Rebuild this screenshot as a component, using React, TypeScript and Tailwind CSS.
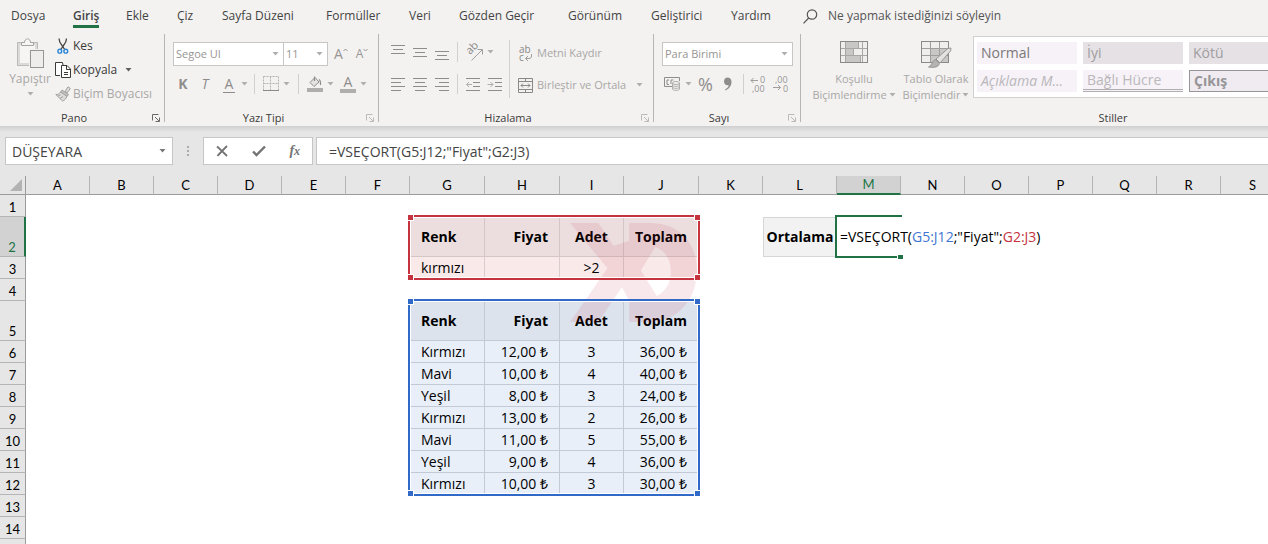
import React from "react";

type IconProps = { className?: string };

const Caret = ({ className = "text-[#b0aeac]" }: IconProps) => (
  <svg width="7" height="4" viewBox="0 0 7 4" className={`shrink-0 ${className}`} aria-hidden="true">
    <path d="M0.500 0H6.500L3.500 3.600Z" fill="currentColor" />
  </svg>
);

const Lines = ({ rows }: { rows: [number, number, number][] }) => (
  <svg width="16" height="16" viewBox="0 0 16 16" fill="#8f8d8b" aria-hidden="true">
    {rows.map(([x, y, w]) => (
      <rect key={y} x={x} y={y} width={w} height="1" />
    ))}
  </svg>
);

const PasteIcon = () => (
  <svg width="30" height="32" viewBox="0 0 30 32" aria-hidden="true">
    <rect x="2.500" y="4.500" width="20" height="23" fill="#dcdad9" stroke="#bdbbba" />
    <rect x="5" y="7" width="15" height="18" fill="#f6f5f4" />
    <path d="M6.500 7.500V4.500H9.500C9.500 -0.300 15.500 -0.300 15.500 4.500H18.500V7.500Z" fill="#f6f5f4" stroke="#a5a3a2" />
    <rect x="14" y="11" width="15" height="19" fill="#f3f2f1" />
    <rect x="15.500" y="12.500" width="13" height="17" fill="#eeedec" stroke="#979594" />
  </svg>
);

const CutIcon = () => (
  <svg width="16" height="16" viewBox="0 0 16 16" fill="none" aria-hidden="true">
    <path d="M4 0.500C4 3 5 5 7 7.500L10 12" stroke="#444" strokeWidth="1.300" />
    <path d="M11.500 0.500C11.500 3 10.500 5 8.500 7.500L5.500 12" stroke="#444" strokeWidth="1.300" />
    <circle cx="4.800" cy="13.200" r="1.900" stroke="#2b88d8" strokeWidth="1.400" />
    <circle cx="10.800" cy="13.200" r="1.900" stroke="#2b88d8" strokeWidth="1.400" />
  </svg>
);

const CopyIcon = () => (
  <svg width="16" height="16" viewBox="0 0 16 16" fill="#fff" stroke="#3b3a39" aria-hidden="true">
    <path d="M5 13.500H0.500V0.500H7.500L8 3" />
    <path d="M6.500 3.500H12L15.500 7V15.500H6.500Z" />
    <path d="M11.500 3.500V7.500H15.500M9 10.500H13M9 12.500H13" fill="none" />
  </svg>
);

const BrushIcon = () => (
  <svg width="16" height="16" viewBox="0 0 16 16" fill="#dddbda" stroke="#a3a1a0" aria-hidden="true">
    <path d="M10 5.500L13 0.800L15.300 2.500L12.300 6.800Z" />
    <path d="M7 4L13.500 8.500L12 10.500L5.800 6Z" fill="#c4c2c1" />
    <path d="M5.800 6L12 10.500C11 12.500 9.500 14.500 7.500 15L0.800 8.500C3 8.800 4.500 7.500 5.800 6Z" />
    <path d="M3 10L5.500 9M5 12.500L8 10.500" />
  </svg>
);

const Launcher = ({ dark = false }: { dark?: boolean }) => (
  <button
    type="button"
    aria-label="İletişim kutusu başlatıcısı"
    className={`absolute right-1 bottom-1 ${dark ? "text-[#6b6967]" : "text-[#bcbab8]"}`}
  >
    <svg width="8" height="8" viewBox="0 0 8 8" fill="none" stroke="currentColor" aria-hidden="true">
      <path d="M0.500 6.500V0.500H6.500M3 3L7 7M7.500 3.500V7.500H3.500" />
    </svg>
  </button>
);

const BordersIcon = () => (
  <svg width="16" height="16" viewBox="0 0 16 16" fill="none" stroke="#b5b3b1" aria-hidden="true">
    <path d="M0.500 0.500H15.500M0.500 7.500H15.500M0.500 0.500V14M7.500 0.500V14M15.500 0.500V14" strokeDasharray="2 1" />
    <path d="M0 14.500H16" stroke="#8c8a88" />
  </svg>
);

const FillIcon = () => (
  <svg width="16" height="16" viewBox="0 0 16 16" fill="none" aria-hidden="true">
    <path d="M3 6.500L8 1.500L12 6L7 10.500Z" fill="#e4e3e2" stroke="#8f8d8b" />
    <path d="M7.500 5V0.500M12 3.500C14 4.500 13.500 7 13.500 9" stroke="#8f8d8b" strokeWidth="1.200" />
    <rect y="12" width="16" height="4" fill="#b0aeac" />
  </svg>
);

const OrientationIcon = () => (
  <svg width="18" height="18" viewBox="0 0 18 18" fill="none" stroke="#a09e9c" className="overflow-visible" aria-hidden="true">
    <text x="0" y="0" fontFamily="Open Sans" fontSize="11" fill="#8a8886" stroke="none" transform="translate(5 12) rotate(-45)">ab</text>
    <path d="M6.500 17.500L17 7M12.500 6.500H17.500V11.500" />
  </svg>
);

const IndentIcon = ({ right = false }: { right?: boolean }) => (
  <svg width="16" height="16" viewBox="0 0 16 16" fill="none" stroke="#8f8d8b" aria-hidden="true">
    <path d="M1 2.500H15M8 6.500H15M8 10.500H15M1 14.500H15" />
    <path d={right ? "M0.500 8.500H6M3.500 6L6 8.500L3.500 11" : "M7 8.500H1.500M4 6L1.500 8.500L4 11"} stroke="#b0aeac" />
  </svg>
);

const WrapIcon = () => (
  <svg width="15" height="17" viewBox="0 0 15 17" fill="none" stroke="#a09e9c" className="overflow-visible" aria-hidden="true">
    <text x="1" y="8" fontFamily="Open Sans" fontSize="10" fill="#8a8886" stroke="none">ab</text>
    <text x="1" y="16" fontFamily="Open Sans" fontSize="10" fill="#8a8886" stroke="none">c</text>
    <path d="M13.500 9V11C13.500 12.500 12.500 13.500 11 13.500H7.500M10 11L7.500 13.500L10 16" />
  </svg>
);

const MergeIcon = () => (
  <svg width="15" height="15" viewBox="0 0 15 15" fill="none" stroke="#8a8886" aria-hidden="true">
    <path d="M0.500 0.500H14.500V14.500H0.500ZM0.500 3.500H14.500M0.500 11.500H14.500M7.500 0.500V3.500M7.500 11.500V14.500" />
    <path d="M3 7.500H12M5 5.500L3 7.500L5 9.500M10 5.500L12 7.500L10 9.500" />
  </svg>
);

const MoneyIcon = () => (
  <svg width="17" height="14" viewBox="0 0 17 14" fill="none" stroke="#8f8d8b" aria-hidden="true">
    <path d="M8 9.500H0.500V0.500H15.500V4" />
    <path d="M5 3H3V7.500H5M7 7V3H9.500" />
    <ellipse cx="12" cy="6" rx="3.500" ry="1.500" fill="#f3f2f1" stroke="#b0aeac" />
    <path d="M8.500 6V12C8.500 13.800 15.500 13.800 15.500 12V6M8.500 8C8.500 9.800 15.500 9.800 15.500 8M8.500 10C8.500 11.800 15.500 11.800 15.500 10" stroke="#b0aeac" />
  </svg>
);

const DecimalIcon = ({ increase = false }: { increase?: boolean }) => (
  <svg width="17" height="16" viewBox="0 0 17 16" fill="none" stroke="#a09e9c" className="overflow-visible" aria-hidden="true">
    <g fontFamily="Open Sans" fontSize="9" fill="#979593" stroke="none">
      {increase ? (
        <>
          <text x="10" y="7">0</text>
          <text x="2" y="16">,00</text>
        </>
      ) : (
        <>
          <text x="2" y="7">,00</text>
          <text x="10" y="16">0</text>
        </>
      )}
    </g>
    <path d={increase ? "M8 4.500H1M3.500 2L1 4.500L3.500 7" : "M0 11.500H7.500M5 9L7.500 11.500L5 14"} />
  </svg>
);

const ConditionalIcon = () => (
  <svg width="28" height="22" viewBox="0 0 28 22" fill="none" aria-hidden="true">
    <rect x="0.500" y="0.500" width="27" height="21" fill="#efeeed" />
    <path d="M6 1H18V7H6ZM6 8H14V14H6ZM6 15H20V21H6Z" fill="#c9c7c6" />
    <path d="M5.500 0.500V21.500M0.500 7.500H27.500M0.500 14.500H27.500M13.500 7V14M18.500 1V7M20.500 15V21M22.500 1V21" stroke="#a9a7a6" />
    <rect x="0.500" y="0.500" width="27" height="21" stroke="#8c8a88" />
  </svg>
);

const TableIcon = () => (
  <svg width="31" height="28" viewBox="0 0 31 28" fill="none" aria-hidden="true">
    <rect x="0.500" y="0.500" width="27" height="21" fill="#efeeed" />
    <path d="M10 8H27V21H10Z" fill="#c9c7c6" />
    <path d="M9.500 0.500V21.500M18.500 0.500V21.500M0.500 7.500H27.500M0.500 14.500H27.500" stroke="#a09e9c" />
    <rect x="0.500" y="0.500" width="27" height="21" stroke="#8c8a88" />
    <path d="M15 18L27 7.500L30 7L29.500 10L19 22Z" fill="#e4e2e1" stroke="#989694" />
    <path d="M14.500 18.500L18.500 22.500C17.500 26 13 27 7.500 26C11 25 10.500 20 14.500 18.500Z" fill="#b5b3b1" stroke="#989694" />
  </svg>
);

const Watermark = ({ className = "" }: IconProps) => (
  <svg viewBox="30 30 380 296" className={className} fill="#b81e37" fillOpacity="0.100" fillRule="evenodd" aria-hidden="true">
    <path d="M30 30H115L160 98L207 84V30H270C360 30 410 95 410 170C410 255 355 326 270 326H207V262L185 222L115 326H30L142 165ZM285 102L242 172L290 248C320 232 332 205 332 175C332 140 315 112 285 102Z" />
  </svg>
);

const tabs = ["Dosya", "Giriş", "Ekle", "Çiz", "Sayfa Düzeni", "Formüller", "Veri", "Gözden Geçir", "Görünüm", "Geliştirici", "Yardım"];

const VLine = ({ className = "h-5" }: IconProps) => <span className={`w-px shrink-0 bg-[#d2d0ce] ${className}`} />;

const GroupLine = () => <div className="mt-0.5 mb-1 w-px shrink-0 bg-[#b8b6b4]" />;

function Group({ label, launcher, className, children }: { label: string; launcher?: "dark" | "light"; className: string; children: React.ReactNode }) {
  return (
    <section aria-label={label} className={`relative flex shrink-0 flex-col ${className}`}>
      <div className="flex h-[78px]">{children}</div>
      <div className={`text-center text-[11px] leading-4 text-[#3b3a39] ${launcher ? "pr-4" : ""}`}>{label}</div>
      {launcher && <Launcher dark={launcher === "dark"} />}
    </section>
  );
}

function Combo({ label, value, className }: { label: string; value: string; className: string }) {
  return (
    <div className={`relative flex h-6 items-center border border-[#c8c6c4] bg-white ${className}`}>
      <select aria-label={label} className="h-5 w-full appearance-none bg-transparent pl-0.5 text-[11px] leading-5 text-[#979593] outline-none">
        <option>{value}</option>
      </select>
      <span className="pointer-events-none absolute inset-y-0 right-1 flex items-center">
        <Caret />
      </span>
    </div>
  );
}

function Ribbon() {
  return (
    <div className="flex h-[94px] overflow-hidden">
      <Group label="Pano" launcher="dark" className="w-[164px]">
        <div className="flex w-full pl-2.5">
          <button type="button" className="flex w-10 flex-col items-center pt-1.5 text-xs text-[#a9a7a5]">
            <PasteIcon />
            <span className="leading-[18px]">Yapıştır</span>
            <Caret className="mt-1 text-[#b0aeac]" />
          </button>
          <div className="flex flex-col pt-0.5 pl-[5px] text-[#3b3a39]">
            <button type="button" className="flex h-6 items-center gap-0.5 text-xs">
              <CutIcon />
              Kes
            </button>
            <button type="button" className="flex h-6 items-center gap-0.5 text-xs">
              <CopyIcon />
              Kopyala
              <Caret className="ml-1.5 text-[#605e5c]" />
            </button>
            <button type="button" className="flex h-6 items-center gap-0.5 text-xs whitespace-nowrap text-[#a9a7a5]">
              <BrushIcon />
              Biçim Boyacısı
            </button>
          </div>
        </div>
      </Group>
      <GroupLine />
      <Group label="Yazı Tipi" launcher="light" className="w-[213px]">
        <div className="flex flex-col gap-2 pt-2.5 pl-2">
          <div className="flex items-center">
            <Combo label="Yazı tipi" value="Segoe UI" className="w-[111px]" />
            <Combo label="Yazı tipi boyutu" value="11" className="w-11 border-l-0" />
            <button type="button" aria-label="Yazı tipini büyüt" className="ml-1.5 flex text-sm leading-5 text-[#979593]">
              A
              <svg width="5" height="4" viewBox="0 0 5 4" fill="none" stroke="currentColor" className="mt-1" aria-hidden="true">
                <path d="M0.500 3L2.500 1L4.500 3" />
              </svg>
            </button>
            <button type="button" aria-label="Yazı tipini küçült" className="ml-2 flex text-xs leading-5 text-[#979593]">
              A
              <svg width="5" height="4" viewBox="0 0 5 4" fill="none" stroke="currentColor" className="mt-1" aria-hidden="true">
                <path d="M0.500 1L2.500 3L4.500 1" />
              </svg>
            </button>
          </div>
          <div className="flex h-5 items-center text-sm leading-5 text-[#8f8d8b]">
            <button type="button" className="w-5 font-bold">K</button>
            <button type="button" className="w-6 italic">T</button>
            <button type="button" className="w-6"><span className="inline-block border-b border-[#8f8d8b] px-0.5 leading-4">A</span></button>
            <Caret />
            <VLine className="ml-1.5 h-5" />
            <button type="button" aria-label="Kenarlıklar" className="ml-2"><BordersIcon /></button>
            <Caret className="ml-1 text-[#b0aeac]" />
            <VLine className="ml-2 h-5" />
            <button type="button" aria-label="Dolgu rengi" className="ml-2"><FillIcon /></button>
            <Caret className="ml-1 text-[#b0aeac]" />
            <button type="button" aria-label="Yazı tipi rengi" className="ml-1.5 w-4 border-b-4 border-[#b0aeac] leading-[14px]">A</button>
            <Caret className="ml-1 text-[#b0aeac]" />
          </div>
        </div>
      </Group>
      <GroupLine />
      <Group label="Hizalama" launcher="light" className="w-[274px]">
        <div className="flex w-full pl-[11px] text-[#a9a7a5]">
          <div className="flex flex-col gap-3 pt-2.5">
            <div className="flex h-5 items-center gap-1.5">
              <button type="button" aria-label="Üste hizala"><Lines rows={[[1, 1, 14], [3, 5, 10], [1, 9, 14]]} /></button>
              <button type="button" aria-label="Ortaya hizala"><Lines rows={[[1, 4, 14], [3, 8, 10], [1, 12, 14]]} /></button>
              <button type="button" aria-label="Alta hizala"><Lines rows={[[1, 7, 14], [3, 11, 10], [1, 15, 14]]} /></button>
              <VLine className="mr-px ml-px h-5" />
              <button type="button" aria-label="Yönlendirme"><OrientationIcon /></button>
              <Caret className="-ml-0.5 text-[#b0aeac]" />
            </div>
            <div className="flex h-5 items-center gap-1.5">
              <button type="button" aria-label="Sola hizala"><Lines rows={[[1, 2, 14], [1, 6, 10], [1, 10, 14], [1, 14, 10]]} /></button>
              <button type="button" aria-label="Ortala"><Lines rows={[[1, 2, 14], [3, 6, 10], [1, 10, 14], [3, 14, 10]]} /></button>
              <button type="button" aria-label="Sağa hizala"><Lines rows={[[1, 2, 14], [5, 6, 10], [1, 10, 14], [5, 14, 10]]} /></button>
              <VLine className="mr-px ml-px h-5" />
              <button type="button" aria-label="Girintiyi azalt"><IndentIcon /></button>
              <button type="button" aria-label="Girintiyi artır"><IndentIcon right /></button>
            </div>
          </div>
          <VLine className="mt-2 ml-1.5 h-[58px]" />
          <div className="flex flex-col gap-3 pt-[11px] pl-2">
            <button type="button" className="flex h-5 items-center gap-1 text-[11px] whitespace-nowrap"><WrapIcon />Metni Kaydır</button>
            <button type="button" className="flex h-5 items-center gap-1 text-[11px] whitespace-nowrap">
              <MergeIcon />Birleştir ve Ortala<Caret className="ml-1.5 text-[#b0aeac]" />
            </button>
          </div>
        </div>
      </Group>
      <GroupLine />
      <Group label="Sayı" launcher="light" className="w-[146px]">
        <div className="flex flex-col gap-2 pt-2.5 pl-2">
          <Combo label="Sayı biçimi" value="Para Birimi" className="w-[131px]" />
          <div className="flex h-5 items-center pl-0.5 text-[#8f8d8b]">
            <button type="button" aria-label="Finansal sayı biçimi"><MoneyIcon /></button>
            <Caret className="ml-1 text-[#b0aeac]" />
            <button type="button" className="ml-1.5 text-lg leading-5">%</button>
            <button type="button" aria-label="Binlik ayırıcı" className="ml-2.5">
              <svg width="10" height="14" viewBox="0 0 10 14" fill="currentColor" aria-hidden="true">
                <path d="M4.500 0.500C7 0.500 8.500 2.200 8.500 4.800C8.500 9 6 12 2.500 13.500L2 12.500C4.300 11.300 5.500 10 5.700 8.200C3 8.800 1 7 1 4.500C1 2 2.500 0.500 4.500 0.500Z" />
              </svg>
            </button>
            <VLine className="ml-2.5 h-5" />
            <button type="button" aria-label="Ondalık artır" className="ml-1.5"><DecimalIcon increase /></button>
            <button type="button" aria-label="Ondalık azalt" className="ml-1.5"><DecimalIcon /></button>
          </div>
        </div>
      </Group>
      <GroupLine />
      <Group label="Stiller" className="w-[624px]">
        <div className="flex w-full pt-1 pl-2 text-[#a9a7a5]">
          <button type="button" className="flex w-[90px] flex-col items-center pt-[5px] text-[11px] leading-4 whitespace-nowrap">
            <span className="flex h-[30px]"><ConditionalIcon /></span>
            <span>Koşullu</span>
            <span className="flex items-center gap-0.5">Biçimlendirme<Caret /></span>
          </button>
          <button type="button" className="flex w-[74px] flex-col items-center pt-[5px] text-[11px] leading-4 whitespace-nowrap">
            <span className="flex h-[30px]"><TableIcon /></span>
            <span>Tablo Olarak</span>
            <span className="flex items-center gap-0.5">Biçimlendir<Caret /></span>
          </button>
          <div className="grid h-[62px] flex-1 grid-cols-[repeat(3,100px)] grid-rows-2 gap-1.5 border border-[#d2d0ce] bg-white px-[3px] py-[5px] text-left text-sm leading-5">
            <button type="button" className="bg-[#f6f2f8] pl-1 text-left text-[#7a7876]">Normal</button>
            <button type="button" className="bg-[#e5e1e5] pl-1 text-left text-[#a09ea0]">İyi</button>
            <button type="button" className="bg-[#e5e1e5] pl-1 text-left text-[#a09ea0]">Kötü</button>
            <button type="button" className="bg-[#f6f2f8] pl-1 text-left text-[#bab8ba] italic">Açıklama M...</button>
            <button type="button" className="border-b-3 border-double border-[#b0aeb0] bg-[#f6f2f8] pl-1 text-left text-[#bab8ba]">Bağlı Hücre</button>
            <button type="button" className="border border-[#979597] bg-[#efebf1] pl-1 text-left font-bold text-[#979597]">Çıkış</button>
          </div>
        </div>
      </Group>
    </div>
  );
}

function FormulaBar() {
  return (
    <div className="flex h-[50px] bg-[#e6e6e6] bg-linear-to-b from-[#cfcfcf] to-[#e6e6e6] to-[6px] pt-[11px] pl-[5px]">
      <div className="relative h-7 w-[168px] border border-[#c6c6c6] bg-white">
        <input aria-label="Ad kutusu" defaultValue="DÜŞEYARA" className="h-full w-full bg-transparent pl-1.5 text-sm text-[#444] outline-none" />
        <span className="pointer-events-none absolute inset-y-0 right-1.5 flex items-center"><Caret className="text-[#777]" /></span>
      </div>
      <svg width="30" height="28" viewBox="0 0 30 28" fill="#ababab" aria-hidden="true">
        <path d="M14 9H16V11H14ZM14 13H16V15H14ZM14 17H16V19H14Z" />
      </svg>
      <div className="flex h-7 w-[110px] items-center justify-around border border-[#c6c6c6] bg-white text-[#737373]">
        <button type="button" aria-label="İptal">
          <svg width="12" height="12" viewBox="0 0 12 12" fill="none" stroke="currentColor" strokeWidth="1.800" aria-hidden="true"><path d="M1 1.500C4 4 8 8 11 11M11 1C8 4 4 8 1.500 11" /></svg>
        </button>
        <button type="button" aria-label="Gir">
          <svg width="14" height="12" viewBox="0 0 14 12" fill="none" stroke="currentColor" strokeWidth="2.400" aria-hidden="true"><path d="M1 6.500L4.500 10L13 1.500" /></svg>
        </button>
        <button type="button" aria-label="İşlev ekle" className="font-['Liberation_Serif',serif] text-sm leading-5 font-bold italic">
          f<span className="text-xs">x</span>
        </button>
      </div>
      <input
        aria-label="Formül çubuğu"
        defaultValue={'=VSEÇORT(G5:J12;"Fiyat";G2:J3)'}
        className="ml-[3px] h-7 min-w-0 flex-1 border border-r-0 border-[#c6c6c6] bg-white pl-3 text-sm text-[#444] outline-none"
      />
    </div>
  );
}

const columns: [string, string][] = [
  ["A", "w-16"], ["B", "w-16"], ["C", "w-16"], ["D", "w-16"], ["E", "w-16"], ["F", "w-16"],
  ["G", "w-[75px]"], ["H", "w-[75px]"], ["I", "w-16"], ["J", "w-[75px]"], ["K", "w-16"], ["L", "w-[74px]"],
  ["M", "w-16"], ["N", "w-16"], ["O", "w-16"], ["P", "w-16"], ["Q", "w-16"], ["R", "w-16"], ["S", "w-16"],
];

const data: Record<number, string[]> = {
  2: ["Renk", "Fiyat", "Adet", "Toplam"],
  3: ["kırmızı", "", ">2", ""],
  5: ["Renk", "Fiyat", "Adet", "Toplam"],
  6: ["Kırmızı", "12,00 ₺", "3", "36,00 ₺"],
  7: ["Mavi", "10,00 ₺", "4", "40,00 ₺"],
  8: ["Yeşil", "8,00 ₺", "3", "24,00 ₺"],
  9: ["Kırmızı", "13,00 ₺", "2", "26,00 ₺"],
  10: ["Mavi", "11,00 ₺", "5", "55,00 ₺"],
  11: ["Yeşil", "9,00 ₺", "4", "36,00 ₺"],
  12: ["Kırmızı", "10,00 ₺", "3", "30,00 ₺"],
};

const cellAlign = ["text-left pl-[11px]", "text-right pr-[11px]", "text-center", "text-right pr-[11px]"];

function RangeFrame({ color, className }: { color: "red" | "blue"; className: string }) {
  const edge = color === "red" ? "border-[#c5343e]" : "border-[#3069c8]";
  const knob = color === "red" ? "bg-[#c5343e]" : "bg-[#3069c8]";
  return (
    <div className={`pointer-events-none absolute -top-0.5 -left-0.5 z-10 w-[292px] border-2 ${edge} ${className}`}>
      <div className="h-full w-full border border-white" />
      {["-top-[3px] -left-[3px]", "-top-[3px] -right-[3px]", "-bottom-[3px] -left-[3px]", "-right-[3px] -bottom-[3px]"].map((corner) => (
        <span key={corner} className={`absolute size-[7px] border border-white ${knob} ${corner}`} />
      ))}
    </div>
  );
}

function RangeCells({ row }: { row: number }) {
  const header = row === 2 || row === 5;
  const red = row < 4;
  const tone = red
    ? header ? "bg-[#ecdede] border-[#d3c6c7]" : "bg-[#f9e9e9] border-[#d9cccd]"
    : header ? "bg-[#dde3ed] border-[#c3cad6]" : "bg-[#e8eff9] border-[#c3cad6]";
  return (
    <>
      {data[row].map((text, i) => (
        <td key={i} className={`border-r border-b p-0 ${i === 0 ? "relative" : ""} ${tone} ${cellAlign[i]} ${header ? "font-bold" : ""}`}>
          {text}
          {i === 0 && row === 2 && (
            <>
              <Watermark className="pointer-events-none absolute top-[5px] left-40 z-[5] h-[101px] w-[127px]" />
              <RangeFrame color="red" className="h-[65px]" />
            </>
          )}
          {i === 0 && row === 5 && <RangeFrame color="blue" className="h-[197px]" />}
        </td>
      ))}
    </>
  );
}

function Sheet() {
  return (
    <div className="min-h-0 flex-1 overflow-hidden bg-white">
      <table className="w-max table-fixed border-separate border-spacing-0 text-sm leading-5 text-black">
        <thead className="font-['Lato',sans-serif] text-[13px] leading-[17px]">
          <tr>
            <th className="h-[19px] w-[26px] border-r border-b border-[#9b9b9b] bg-[#e6e6e6] p-0">
              <svg width="12" height="12" viewBox="0 0 12 12" fill="#b3b3b3" className="ml-2.5" aria-label="Tümünü seç"><path d="M12 0V12H0Z" /></svg>
            </th>
            {columns.map(([name, width]) => (
              <th
                key={name}
                scope="col"
                className={`h-[19px] border-r p-0 font-normal ${width} ${
                  name === "M" ? "border-b-2 border-r-[#b5b5b5] border-b-[#217346] bg-[#d2d2d2] text-[#217346]" : "border-b border-r-[#b5b5b5] border-b-[#9b9b9b] bg-[#e6e6e6]"
                }`}
              >
                {name}
              </th>
            ))}
          </tr>
        </thead>
        <tbody>
          {Array.from({ length: 15 }, (_, i) => i + 1).map((row) => (
            <tr key={row} className={row === 2 || row === 5 ? "h-10" : "h-[22px]"}>
              <th
                scope="row"
                className={`border-b p-0 align-bottom font-['Lato',sans-serif] text-[13px] leading-[18px] font-normal ${
                  row === 2 ? "border-r-2 border-r-[#217346] border-b-[#b5b5b5] bg-[#d2d2d2] text-[#217346]" : "border-r border-r-[#9b9b9b] border-b-[#b5b5b5] bg-[#e6e6e6]"
                }`}
              >
                {row < 15 ? row : ""}
              </th>
              <td colSpan={6} className="p-0" />
              {data[row] ? <RangeCells row={row} /> : <td colSpan={4} className="p-0" />}
              <td className="p-0" />
              {row === 2 ? (
                <>
                  <td className="border border-[#d6d6d6] bg-[#f2f2f2] p-0 text-center font-bold">Ortalama</td>
                  <td colSpan={7} className="relative p-0 pl-[3px] whitespace-nowrap">
                    <span>=VSEÇORT(</span>
                    <span className="text-[#3f76d2]">G5:J12</span>
                    <span>;"Fiyat";</span>
                    <span className="text-[#c5343e]">G2:J3</span>
                    <span>)</span>
                    <div className="pointer-events-none absolute -top-0.5 -left-0.5 h-[43px] w-[67px] border-2 border-r-0 border-[#217346]">
                      <span className="absolute -right-px -bottom-[3px] h-1 w-1.5 border-l border-white bg-[#217346]" />
                    </div>
                  </td>
                </>
              ) : (
                <td colSpan={8} className="p-0" />
              )}
            </tr>
          ))}
        </tbody>
      </table>
    </div>
  );
}

export default function App() {
  return (
    <div className="flex h-screen flex-col overflow-hidden bg-[#f3f2f1] font-['Open_Sans','Noto_Sans',sans-serif]">
      <nav className="grid h-8 shrink-0 grid-cols-[62px_53px_51px_45px_104px_83px_50px_109px_83px_80px_72px_auto] justify-start pl-[11px] text-xs leading-8 whitespace-nowrap text-[#444]">
        {tabs.map((tab) => (
          <a key={tab} href="#" className={tab === "Giriş" ? "relative justify-self-start font-semibold" : ""}>
            {tab}
            {tab === "Giriş" && <span className="absolute inset-x-0 bottom-1 h-[3px] bg-[#217346]" />}
          </a>
        ))}
        <label className="flex items-center gap-2.5">
          <svg width="15" height="15" viewBox="0 0 15 15" fill="none" stroke="#555" strokeWidth="1.200" aria-hidden="true">
            <circle cx="9" cy="5.500" r="4.700" />
            <path d="M5.700 9L0.500 14.300" />
          </svg>
          <input aria-label="Ara" placeholder="Ne yapmak istediğinizi söyleyin" className="w-52 bg-transparent outline-none placeholder:text-[#555]" />
        </label>
      </nav>
      <Ribbon />
      <FormulaBar />
      <Sheet />
    </div>
  );
}
